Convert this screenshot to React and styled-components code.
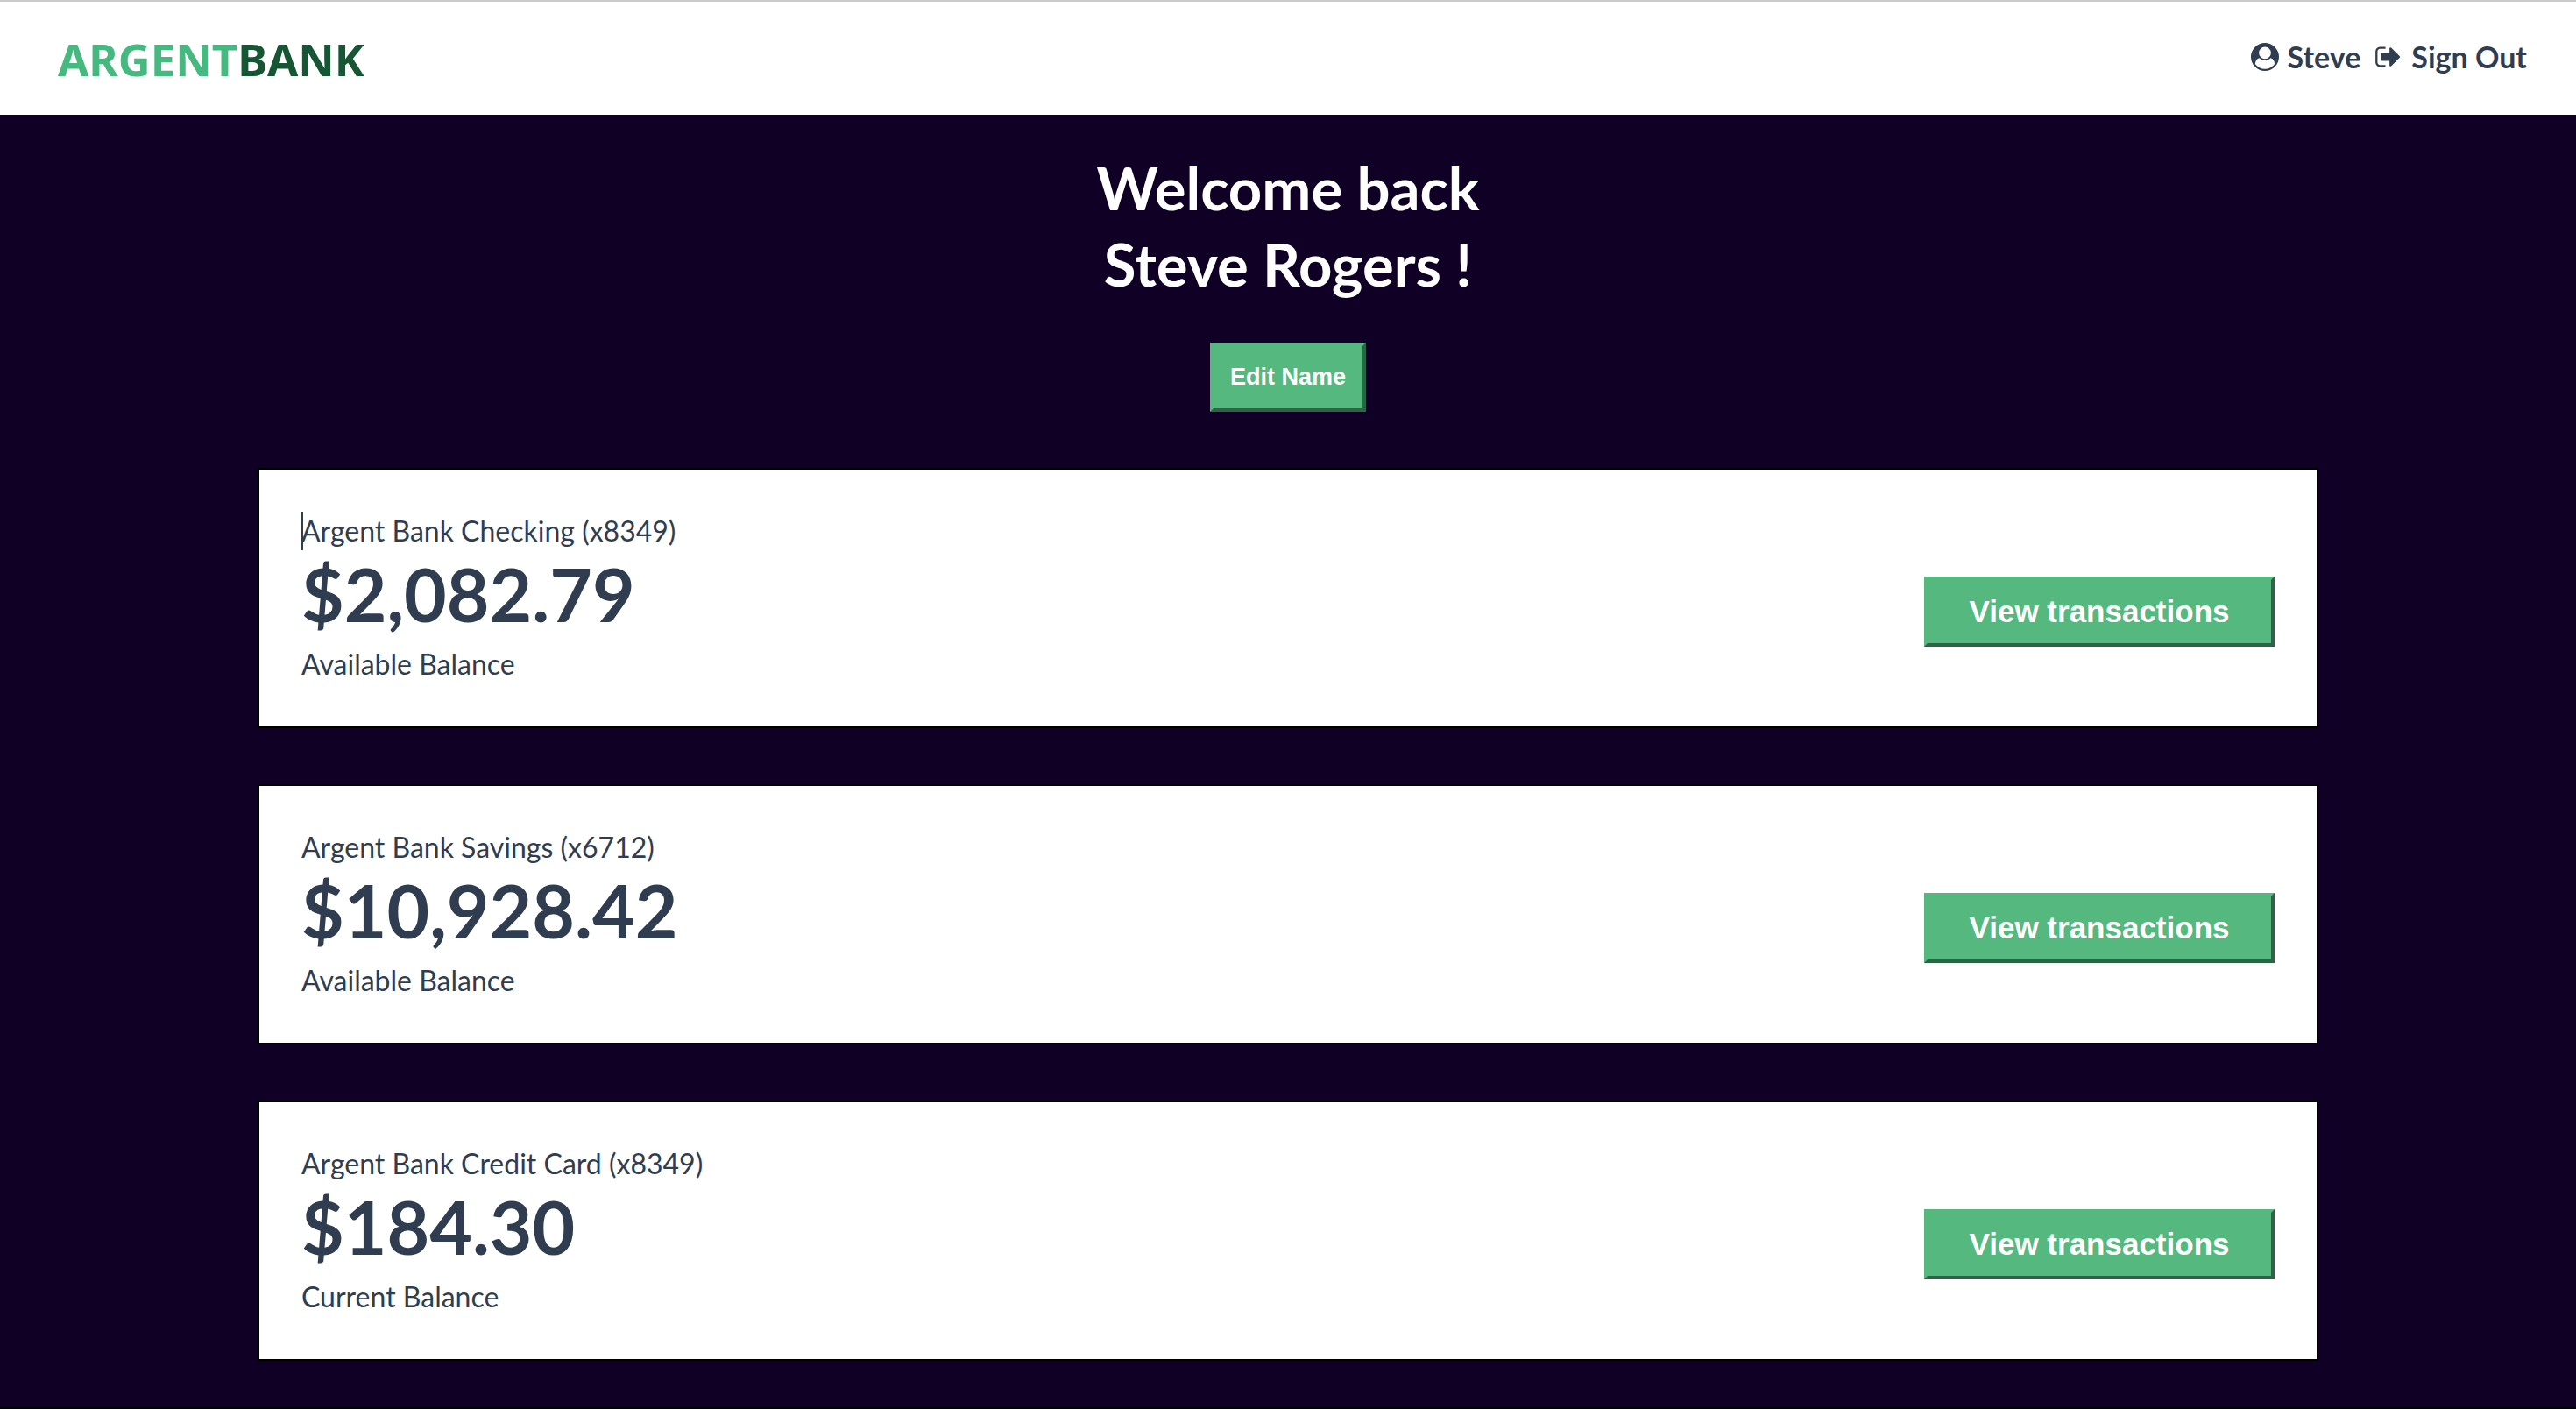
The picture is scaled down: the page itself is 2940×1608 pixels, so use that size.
import React from 'react';
import styled, { createGlobalStyle } from 'styled-components';

const colors = {
  night: '#100026',
  ink: '#303d50',
  green: '#55b97f',
  greenShade: '#2b6545',
  logoLight: '#45b97f',
  logoDark: '#165634',
};

const GlobalStyle = createGlobalStyle`
  *, *::before, *::after { box-sizing: border-box; }
  body {
    margin: 0;
    background: ${colors.night};
    color: ${colors.ink};
    font-family: Avenir, Lato, sans-serif;
  }
  h1, h2, p { margin: 0; }
`;

const Page = styled.div`
  display: flex;
  flex-direction: column;
  min-height: 100vh;
  border-bottom: 2px solid #000;
`;

const Header = styled.header`
  display: flex;
  align-items: center;
  justify-content: space-between;
  padding: 33px 56px 32px 66px;
  border-top: 2px solid #c9c9c9;
  background: #fff;
`;

const Logo = styled.a`
  color: ${colors.logoLight};
  font: 700 51px/64px 'Noto Sans', sans-serif;
  text-decoration: none;
`;

const LogoAccent = styled.span`
  color: ${colors.logoDark};
`;

const Nav = styled.nav`
  display: flex;
  gap: 16px;
  padding-bottom: 4px;
`;

const NavLink = styled.a`
  display: flex;
  align-items: center;
  gap: 10px;
  color: ${colors.ink};
  font-size: 34px;
  font-weight: 700;
  line-height: 40px;
  text-decoration: none;
`;

const Icon = styled.svg`
  width: 32px;
  height: 32px;
  fill: currentColor;
`;

const Main = styled.main`
  display: flex;
  flex: 1;
  flex-direction: column;
  align-items: center;
  gap: 64px;
  padding: 40px 10% 48px;
`;

const Welcome = styled.section`
  display: flex;
  flex-direction: column;
  align-items: center;
  gap: 46px;
`;

const Title = styled.h1`
  color: #fff;
  font-size: 67px;
  font-weight: 700;
  line-height: 87px;
  text-align: center;
`;

const Button = styled.button`
  border: 4px solid;
  border-color: ${colors.green} ${colors.greenShade} ${colors.greenShade} ${colors.green};
  background: ${colors.green};
  color: #fff;
  font-family: Arial, 'Liberation Sans', sans-serif;
  font-weight: 700;
`;

const EditButton = styled(Button)`
  padding: 20px 19px;
  font-size: 27px;
  line-height: 31px;
`;

const TransactionsButton = styled(Button)`
  width: 400px;
  margin-top: 32px;
  padding: 16px;
  font-size: 35px;
  line-height: 40px;
`;

const Account = styled.section`
  display: flex;
  align-items: center;
  justify-content: space-between;
  width: 100%;
  padding: 50px 48px 51px;
  border: 2px solid #000;
  background: #fff;
`;

const AccountTitle = styled.h2`
  position: relative;
  font-size: 32px;
  font-weight: 400;
  line-height: 40px;

  &::before {
    content: ${({ $caret }) => ($caret ? "''" : 'none')};
    position: absolute;
    top: -2px;
    left: 0;
    width: 2px;
    height: 44px;
    background: ${colors.ink};
  }
`;

const Amount = styled.p`
  margin: 4px 0 12px;
  font-size: 84px;
  font-weight: 700;
  line-height: 96px;
`;

const Description = styled.p`
  font-size: 32px;
  line-height: 40px;
`;

const accounts = [
  { title: 'Argent Bank Checking (x8349)', amount: '$2,082.79', description: 'Available Balance', caret: true },
  { title: 'Argent Bank Savings (x6712)', amount: '$10,928.42', description: 'Available Balance' },
  { title: 'Argent Bank Credit Card (x8349)', amount: '$184.30', description: 'Current Balance' },
];

const UserIcon = () => (
  <Icon viewBox="0 0 1792 1792" aria-hidden="true">
    <path d="M1523 1339q-22-155-87.5-257.5t-184.5-118.5q-67 74-159.5 115.5t-195.5 41.5-195.5-41.5-159.5-115.5q-119 16-184.5 118.5t-87.5 257.5q106 150 271 237.5t356 87.5 356-87.5 271-237.5zm-243-699q0-159-112.5-271.5t-271.5-112.5-271.5 112.5-112.5 271.5 112.5 271.5 271.5 112.5 271.5-112.5 112.5-271.5zm512 256q0 182-71 347.5t-190.5 286-285.5 191.5-349 71-348.5-71-286-191-191-286-71-348 71-348 191-286 286-191 348-71 348 71 286 191 191 286 71 348z" />
  </Icon>
);

const SignOutIcon = () => (
  <Icon viewBox="0 0 1792 1792" aria-hidden="true">
    <path d="M704 1440q0 4 1 20t.5 26.5-3 23.5-10 19.5-20.5 6.5h-320q-119 0-203.5-84.5t-84.5-203.5v-704q0-119 84.5-203.5t203.5-84.5h320q13 0 22.5 9.5t9.5 22.5q0 4 1 20t.5 26.5-3 23.5-10 19.5-20.5 6.5h-320q-66 0-113 47t-47 113v704q0 66 47 113t113 47h312l11.5 1 11.5 3 8 5.5 7 9 2 13.5zm928-544q0 26-19 45l-544 544q-19 19-45 19t-45-19-19-45v-288h-448q-26 0-45-19t-19-45v-384q0-26 19-45t45-19h448v-288q0-26 19-45t45-19 45 19l544 544q19 19 19 45z" />
  </Icon>
);

export default function App() {
  return (
    <Page>
      <GlobalStyle />
      <Header>
        <Logo href="#">ARGENT<LogoAccent>BANK</LogoAccent></Logo>
        <Nav>
          <NavLink href="#profile"><UserIcon />Steve</NavLink>
          <NavLink href="#sign-out"><SignOutIcon />Sign Out</NavLink>
        </Nav>
      </Header>
      <Main>
        <Welcome>
          <Title>Welcome back<br />Steve Rogers !</Title>
          <EditButton type="button">Edit Name</EditButton>
        </Welcome>
        {accounts.map(({ title, amount, description, caret }) => (
          <Account key={title}>
            <div>
              <AccountTitle $caret={caret}>{title}</AccountTitle>
              <Amount>{amount}</Amount>
              <Description>{description}</Description>
            </div>
            <TransactionsButton type="button">View transactions</TransactionsButton>
          </Account>
        ))}
      </Main>
    </Page>
  );
}
